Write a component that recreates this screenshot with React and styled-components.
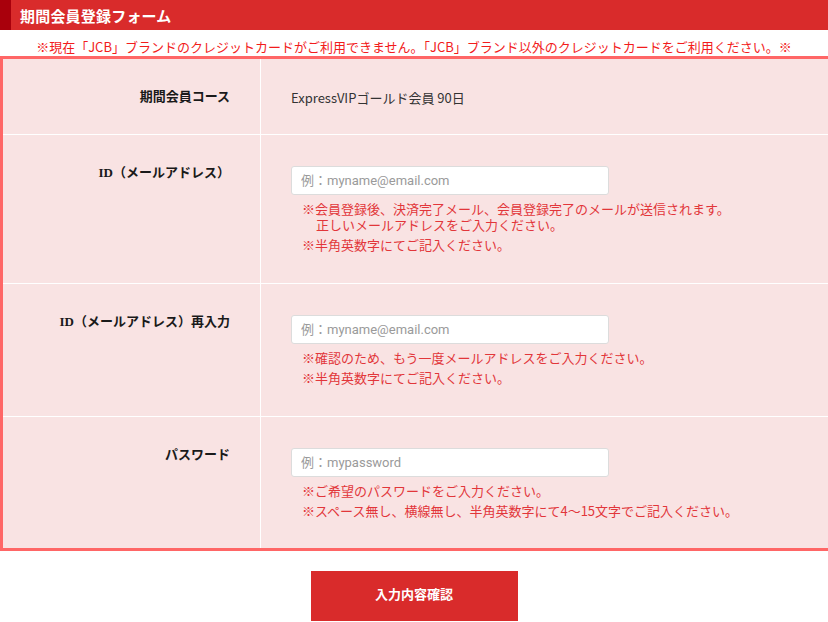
import React from 'react';
import styled, { createGlobalStyle } from 'styled-components';

const GlobalStyle = createGlobalStyle`
  html, body {
    margin: 0;
    padding: 0;
    background: #fff;
    overflow: hidden;
  }
  body {
    font-family: "Noto Sans CJK JP", "Noto Sans", sans-serif;
    color: #222;
  }
`;

const Page = styled.div`
  width: 828px;
  overflow: hidden;
`;

const TitleBar = styled.h1`
  margin: 0;
  height: 30px;
  background: #d92b2b;
  border-left: 11px solid #a9000c;
  padding-left: 9px;
  display: flex;
  align-items: center;
  color: #fff;
  font-size: 15px;
  font-weight: 700;
  letter-spacing: 0.2px;
`;

const Notice = styled.p`
  margin: 0;
  padding-top: 8px;
  height: 18px;
  text-align: center;
  font-size: 13px;
  line-height: 18px;
  color: #f21c1c;
  white-space: nowrap;
`;

const FormTable = styled.table`
  width: 860px;
  table-layout: fixed;
  border-collapse: collapse;
  border: 3px solid #ff6666;
  background: #f9e3e3;
`;

const Row = styled.tr`
  border-top: 1px solid #fff;
  &:first-child {
    border-top: none;
  }
`;

const Label = styled.th`
  width: 259px;
  height: ${p => p.$h}px;
  box-sizing: border-box;
  padding: 29px 30px 0 0;
  border-right: 1px solid #fff;
  vertical-align: top;
  text-align: right;
  font-family: "Liberation Serif", "Noto Sans CJK JP", serif;
  font-size: 13px;
  font-weight: 700;
  color: #1a1a1a;
  line-height: 17px;
  white-space: nowrap;
`;

const Cell = styled.td`
  padding: ${p => p.$top}px 0 0 30px;
  vertical-align: top;
  font-size: 13px;
  line-height: 17px;
  color: #333;
`;

const Field = styled.input`
  display: block;
  width: 318px;
  height: 29px;
  box-sizing: border-box;
  border: 1px solid #dcdcdc;
  border-radius: 3px;
  background: #fff;
  padding: 0 9px;
  font-family: Roboto, "Noto Sans CJK JP", sans-serif;
  font-size: 13px;
  color: #333;
  &::placeholder {
    color: #9a9a9a;
  }
`;

const Notes = styled.div`
  margin-top: 6px;
  padding-left: 11px;
  display: flex;
  flex-direction: column;
  gap: 4px;
`;

const Note = styled.p`
  margin: 0;
  padding-left: 14px;
  text-indent: -14px;
  font-size: 13px;
  line-height: 16px;
  color: #e2363a;
`;

const ButtonWrap = styled.div`
  display: flex;
  justify-content: center;
  padding-top: 20px;
`;

const Submit = styled.button`
  width: 207px;
  height: 50px;
  border: none;
  background: #d92b2b;
  color: #fff;
  font-family: "Noto Sans CJK JP", sans-serif;
  font-size: 13px;
  font-weight: 700;
  padding: 0 0 6px;
  cursor: pointer;
`;

const rows = [
  {
    label: 'ID（メールアドレス）',
    h: 149,
    placeholder: '例：myname@email.com',
    notes: [
      ['※会員登録後、決済完了メール、会員登録完了のメールが送信されます。', '正しいメールアドレスをご入力ください。'],
      ['※半角英数字にてご記入ください。'],
    ],
  },
  {
    label: 'ID（メールアドレス）再入力',
    h: 133,
    placeholder: '例：myname@email.com',
    notes: [['※確認のため、もう一度メールアドレスをご入力ください。'], ['※半角英数字にてご記入ください。']],
  },
  {
    label: 'パスワード',
    h: 133,
    placeholder: '例：mypassword',
    notes: [['※ご希望のパスワードをご入力ください。'], ['※スペース無し、横線無し、半角英数字にて4～15文字でご記入ください。']],
  },
];

export default function App() {
  return (
    <Page>
      <GlobalStyle />
      <TitleBar>期間会員登録フォーム</TitleBar>
      <Notice>
        ※現在「JCB」ブランドのクレジットカードがご利用できません。「JCB」ブランド以外のクレジットカードをご利用ください。※
      </Notice>
      <FormTable>
        <tbody>
          <Row>
            <Label $h={77}>期間会員コース</Label>
            <Cell $top={30}>ExpressVIPゴールド会員 90日</Cell>
          </Row>
          {rows.map(r => (
            <Row key={r.label}>
              <Label $h={r.h}>{r.label}</Label>
              <Cell $top={31}>
                <Field type="text" placeholder={r.placeholder} />
                <Notes>
                  {r.notes.map(lines => (
                    <Note key={lines[0]}>
                      {lines.map((l, i) => (
                        <React.Fragment key={l}>
                          {i > 0 && <br />}
                          {l}
                        </React.Fragment>
                      ))}
                    </Note>
                  ))}
                </Notes>
              </Cell>
            </Row>
          ))}
        </tbody>
      </FormTable>
      <ButtonWrap>
        <Submit type="button">入力内容確認</Submit>
      </ButtonWrap>
    </Page>
  );
}
